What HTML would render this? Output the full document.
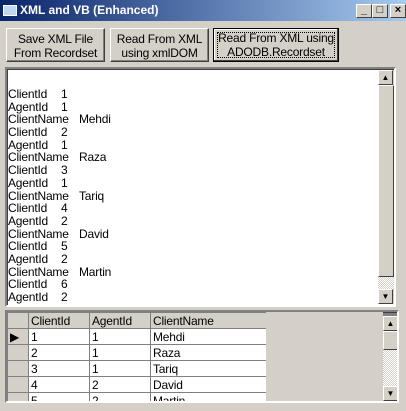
<!DOCTYPE html>
<html><head><style>
*{box-sizing:border-box;margin:0;padding:0}
body{width:406px;height:411px;background:#d4d0c8;font-family:"Liberation Sans",Arial,sans-serif;font-size:12px;position:relative;overflow:hidden}
.abs{position:absolute}
.title{left:0;top:0;width:406px;height:21px;background:linear-gradient(90deg,#0a246a,#a6caf0);color:#fff;font-weight:bold;font-size:12px;line-height:21px;padding-left:20px}
.cb{top:4px;width:16px;height:14px;background:#d4d0c8;border:1px solid;border-color:#fff #404040 #404040 #fff;font-size:11px;line-height:11px;text-align:center;color:#000;font-weight:bold}
.btn{background:#d4d0c8;border:1px solid;border-color:#fff #404040 #404040 #fff;box-shadow:inset -1px -1px #808080;text-align:center;font-size:12px;line-height:14px;padding-top:3px;color:#000;letter-spacing:-0.2px}
.sunk{border:2px solid;border-color:#808080 #fff #fff #808080;box-shadow:inset 1px 1px #404040}
.arr{width:15px;height:15px;background:#d4d0c8;border:1px solid;border-color:#fff #404040 #404040 #fff;font-size:8px;line-height:13px;text-align:center}
.dith{background-image:repeating-conic-gradient(#fff 0 25%,#d4d0c8 0 50%);background-size:2px 2px}
.txt{font-size:12px;letter-spacing:-0.2px}
.txt div{height:12.7px;line-height:12.7px;position:relative;white-space:nowrap}
.txt span{position:absolute;top:0}
table{border-collapse:collapse;font-size:12px;letter-spacing:-0.2px}
td{border:1px solid #808080;height:16px;padding:0 2px;line-height:14px;background:#fff}
td.h{background:#d4d0c8;border-color:#808080}
</style></head><body>
<div class="abs title">XML and VB (Enhanced)</div>
<div class="abs" style="left:3px;top:5px;width:14px;height:11px;background:#c0d8f0;border:1px solid #fff"></div>
<div class="abs cb" style="left:356px">_</div>
<div class="abs cb" style="left:372px">□</div>
<div class="abs cb" style="left:390px">×</div>

<div class="abs btn" style="left:6px;top:28px;width:99px;height:34px">Save XML File<br>From Recordset</div>
<div class="abs btn" style="left:110px;top:28px;width:99px;height:34px">Read From XML<br>using xmlDOM</div>
<div class="abs btn" style="left:213px;top:28px;width:126px;height:34px;border:1px solid #000;box-shadow:inset -1px -1px #404040,inset 1px 1px #fff"><div style="position:absolute;left:3px;top:3px;right:3px;bottom:3px;border:1px dotted #000"></div><span style="position:relative;top:-1px">Read From XML using<br>ADODB.Recordset</span></div>

<div class="abs sunk" style="left:5px;top:67px;width:391px;height:240px;background:#fff">
<div class="abs txt" style="left:1px;top:19px;width:360px">
<div>ClientId<span style="left:53px">1</span></div>
<div>AgentId<span style="left:53px">1</span></div>
<div>ClientName<span style="left:71px">Mehdi</span></div>
<div>ClientId<span style="left:53px">2</span></div>
<div>AgentId<span style="left:53px">1</span></div>
<div>ClientName<span style="left:71px">Raza</span></div>
<div>ClientId<span style="left:53px">3</span></div>
<div>AgentId<span style="left:53px">1</span></div>
<div>ClientName<span style="left:71px">Tariq</span></div>
<div>ClientId<span style="left:53px">4</span></div>
<div>AgentId<span style="left:53px">2</span></div>
<div>ClientName<span style="left:71px">David</span></div>
<div>ClientId<span style="left:53px">5</span></div>
<div>AgentId<span style="left:53px">2</span></div>
<div>ClientName<span style="left:71px">Martin</span></div>
<div>ClientId<span style="left:53px">6</span></div>
<div>AgentId<span style="left:53px">2</span></div>
</div>
<div class="abs" style="left:371px;top:1px;width:16px;height:234px;background:#d4d0c8"></div>
<div class="abs arr" style="left:371px;top:1px">▲</div>
<div class="abs" style="left:371px;top:16px;width:16px;height:192px;background:#d4d0c8;border:1px solid;border-color:#fff #404040 #404040 #fff"></div>
<div class="abs dith" style="left:371px;top:208px;width:16px;height:12px"></div>
<div class="abs arr" style="left:371px;top:220px">▼</div>
</div>

<div class="abs sunk" style="left:5px;top:310px;width:394px;height:93px;background:#808080;overflow:hidden">
<table class="abs" style="left:0;top:0">
<tr><td class="h" style="width:21px"></td><td class="h" style="width:61px">ClientId</td><td class="h" style="width:61px">AgentId</td><td class="h" style="width:116px">ClientName</td></tr>
<tr><td class="h">▶</td><td>1</td><td>1</td><td>Mehdi</td></tr>
<tr><td class="h"></td><td>2</td><td>1</td><td>Raza</td></tr>
<tr><td class="h"></td><td>3</td><td>1</td><td>Tariq</td></tr>
<tr><td class="h"></td><td>4</td><td>2</td><td>David</td></tr>
<tr><td class="h"></td><td>5</td><td>2</td><td>Martin</td></tr>
</table>
<div class="abs" style="left:259px;top:0;width:117px;height:90px;background:#d4d0c8"></div>
<div class="abs arr" style="left:376px;top:4px">▲</div>
<div class="abs" style="left:376px;top:19px;width:15px;height:19px;background:#d4d0c8;border:1px solid;border-color:#fff #404040 #404040 #fff"></div>
<div class="abs dith" style="left:376px;top:38px;width:15px;height:36px"></div>
<div class="abs arr" style="left:376px;top:74px">▼</div>
</div>
</body></html>
